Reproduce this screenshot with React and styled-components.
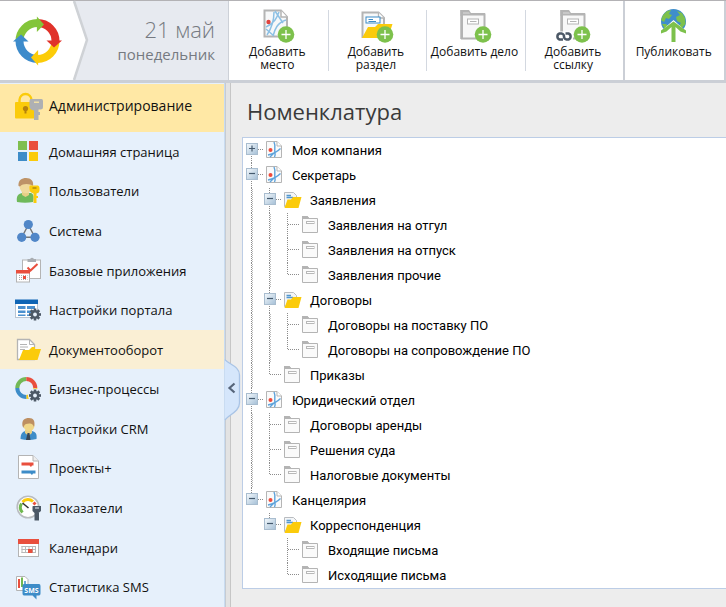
import React, { useState } from "react";
import styled, { createGlobalStyle, css } from "styled-components";

const GlobalStyle = createGlobalStyle`
  *, *::before, *::after { box-sizing: border-box; }
  body { margin: 0; background: #ededed; font-family: "Open Sans", sans-serif; color: #111; }
  ul { list-style: none; margin: 0; padding: 0; }
  button { font: inherit; color: inherit; background: none; border: 0; padding: 0; cursor: pointer; }
  a { color: inherit; text-decoration: none; }
  svg { display: block; overflow: visible; }
`;

/* ---------- layout parts ---------- */

const Page = styled.div`
  display: flex;
  flex-direction: column;
  min-height: 100vh;
`;

const Header = styled.header`
  display: flex;
  height: 83px;
  background: #fff;
  border-top: 1px solid #b3b2b5;
  border-bottom: 3px solid #cbcfd6;
`;

const Brand = styled.div`
  display: flex;
  flex: none;
  width: 229px;
  background: #e7eaf0;
  border-right: 1px solid #cdd1d8;
`;

const LogoLink = styled.a`
  display: block;
  flex: none;
  height: 79px;
`;

const Today = styled.div`
  flex: 1;
  padding: 15px 13px 0 0;
  text-align: right;
  white-space: nowrap;
  color: #767a81;
`;

const Day = styled.div`
  font-size: 22px;
  font-weight: 300;
  line-height: 26px;
`;

const Weekday = styled.div`
  font-size: 15px;
  line-height: 24px;
`;

const Toolbar = styled.div`
  display: flex;
  flex: 1;
  border-right: 2px solid #cbcfd6;
`;

const Tool = styled.button`
  display: flex;
  flex: 1 1 0;
  flex-direction: column;
  align-items: center;
  padding: 8px 2px 0 0;
  position: relative;
  font-size: 12px;
  line-height: 13px;
  ${(p) =>
    p.$edge
      ? css`
          border-left: 2px solid #cbcfd6;
        `
      : css`
          & + &::before {
            content: "";
            position: absolute;
            left: 0;
            top: 9px;
            bottom: 9px;
            width: 1px;
            background: #d3d8e0;
          }
        `}
`;

const ToolLabel = styled.span`
  margin-top: 2px;
  white-space: pre-line;
`;

const Body = styled.div`
  display: flex;
  flex: 1;
`;

const Sidebar = styled.nav`
  display: flex;
  flex-direction: column;
  flex: none;
  width: 225px;
  padding-top: 1px;
  background: #e6f0fb;
  border-right: 1px solid #c9dcf1;
`;

const SectionLink = styled.a`
  display: flex;
  align-items: center;
  gap: 7px;
  height: 48px;
  padding: 0 0 5px 14px;
  background: #ffe8a5;
  font-size: 14px;
`;

const Menu = styled.ul`
  display: grid;
  flex: 1;
  grid-auto-rows: 1fr;
`;

const MenuLink = styled.a`
  display: flex;
  align-items: center;
  gap: 7px;
  height: 100%;
  min-height: 39px;
  padding-left: 14px;
  font-size: 13px;
  background: ${(p) => (p.$active ? "#faefd4" : "transparent")};
`;

const Splitter = styled.div`
  position: relative;
  flex: none;
  width: 6px;
  background: #e3e3e3;
  border-left: 1px solid #c6cbd2;
  border-right: 1px solid #c6c6c6;
`;

const CollapseButton = styled.button`
  position: absolute;
  left: -1px;
  top: 276px;
`;

const Content = styled.main`
  flex: 1;
  min-width: 0;
  padding: 12px 0 18px 11px;
`;

const Title = styled.h1`
  margin: 0 0 10px 5px;
  font-size: 22px;
  line-height: 32px;
  font-weight: 400;
  color: #3a3a3a;
`;

const TreePanel = styled.section`
  background: #fff;
  border: 1px solid #bccde6;
  border-right: 0;
`;

const Row = styled.div`
  display: flex;
  height: 25px;
  font: 13px/25px Roboto, sans-serif;
  color: #000;
`;

const vLine = `repeating-linear-gradient(to bottom, #8c8c8c 0 1px, transparent 1px 2px)`;
const vLineSoft = `repeating-linear-gradient(to bottom, transparent 0 1px, #b8b8b8 1px 2px)`;
const hLine = `repeating-linear-gradient(to right, #8c8c8c 0 1px, transparent 1px 2px)`;

const Guide = styled.span`
  flex: none;
  width: 18px;
  background-repeat: no-repeat;
  ${(p) =>
    p.$line &&
    css`
      background-image: ${vLine}, ${vLineSoft};
      background-size: 1px 100%, 1px 100%;
      background-position: 8px 0, 9px 0;
    `}
`;

const Joint = styled.span`
  display: flex;
  flex: none;
  width: 22px;
  padding: 5px 0 0 3px;
  background-repeat: no-repeat;
  background-image: ${hLine}, ${vLine}, ${vLine};
  background-size: 12px 1px, 1px ${(p) => (p.$above ? "12px" : "0")}, 1px ${(p) => (p.$below ? "13px" : "0")};
  background-position: 9px 11px, 8px 0, 8px 12px;
`;

const Toggle = styled.button`
  width: 12px;
  height: 12px;
`;

const NodeIcon = styled.span`
  flex: none;
  width: 27px;
  padding: 3px 0 0 1px;
`;

/* ---------- icons ---------- */

const GRAY = "#b4b4b4";
const GREEN = "#7dc14c";
const RED = "#e94f3d";
const BLUE = "#3d8cc8";
const YELLOW = "#fbcb0b";
const SLATE = "#4c5866";

function Logo() {
  const parts = [
    ["#83c53a", 0],
    ["#e0322a", 90],
    ["#fccc08", 180],
    ["#3d8bcb", 270],
  ];
  return (
    <svg width="90" height="79" viewBox="0 1 90 79" aria-hidden="true">
      <path d="M0 1H74L87 40L74 80H0Z" fill="#fff" />
      <path d="M74 1L87 40L74 80" fill="none" stroke="#cfd2d6" strokeWidth="2.5" />
      <g transform="translate(37.5 41)">
        {parts.map(([c, a]) => (
          <path key={a} d="M-18 0A18 18 0 0 1 0 -18" transform={`rotate(${a})`} fill="none" stroke={c} strokeWidth="8" />
        ))}
        {parts.map(([c, a]) => (
          <path key={a} d="M-.6 -24.5L6.500 -16.5L-.6 -9Z" transform={`rotate(${a})`} fill={c} />
        ))}
      </g>
    </svg>
  );
}

function Plus() {
  return (
    <g>
      <circle cx="23" cy="25.5" r="8.3" fill={GREEN} />
      <path d="M23 21V30M18.500 25.5H27.500" stroke="#fff" strokeWidth="1.3" />
    </g>
  );
}

function ToolIcon({ kind }) {
  return (
    <svg width="32" height="34" viewBox="-2 0 32 34" aria-hidden="true">
      {kind === "place" && (
        <g fill="none">
          <path d="M1.500 1.500H18L24 8V27.500H1.500Z" fill="#f7f8f9" stroke={GRAY} strokeWidth="2" />
          <path d="M11 3C11 12 8 20 4 26M12 2L20 14M3 18C12 14 14 8 16 3M23 11C14 14 12 20 10 27M3 20L11 27" stroke="#8cc0e4" strokeWidth="1.5" />
          <path d="M18 1.500V8H24" fill="#fff" stroke={GRAY} strokeWidth="1.5" />
          <circle cx="5.5" cy="13" r="2.2" fill="#e0433e" />
        </g>
      )}
      {kind === "section" && (
        <g transform="translate(-1 0)">
          <path d="M1.500 28V3.500H17.500L23 9V28Z" fill="#f7f8f9" stroke={GRAY} strokeWidth="2" />
          <path d="M17.500 3.500V9H23" fill="#fff" stroke={GRAY} strokeWidth="1.3" />
          <rect x="5" y="8" width="14" height="6" fill="#fff" stroke={BLUE} />
          <path d="M7.500 10.500H12M7.500 12.500H15" stroke={BLUE} />
          <path d="M1 29L7 18H14L17 15H31.500L27 29Z" fill={YELLOW} />
        </g>
      )}
      {(kind === "case" || kind === "link") && (
        <g transform={kind === "link" ? "translate(1 0)" : undefined}>
          <path d="M.5 1H9L11 4H25V7H.5Z" fill={GRAY} />
          <path d="M2 3V29.500H24.500V5.500H3" fill="#f8f8f8" stroke={GRAY} strokeWidth="2" />
          <path d="M3 3H9L10 5H3Z" fill="#c8c8c8" />
          <rect x="7.5" y="10" width="11" height="5" fill="#fff" stroke={GRAY} />
          <path d="M10 12.500H16.500" stroke={GRAY} />
          <path d="M1 1V30" stroke={GRAY} strokeWidth="1.5" />
        </g>
      )}
      {kind === "link" && (
        <g fill="none" transform="translate(-3 0)">
          <rect x="-1" y="22.5" width="18" height="10" fill="#fff" />
          <path d="M7 30.5H3.500A3.200 3.200 0 0 1 3.500 24.5H5.500A3.200 3.200 0 0 1 8 28.500M9.500 24.5H12.500A3.200 3.200 0 0 1 12.500 30.5H10.500A3.200 3.200 0 0 1 8 26.500" stroke={SLATE} strokeWidth="2.5" />
        </g>
      )}
      {kind === "publish" ? (
        <g transform="translate(-2 0)">
          <circle cx="15.5" cy="12.5" r="12.5" fill="#3f8ecb" />
          <path d="M5 6L9 2L13 1L11 5L14 6L11 10L8 9L6 13L3 11ZM19 2L24 4L27 9L27.500 15L24 19L21 17L23 14L19 12L18 8L22 6ZM4 15L8 15L10 17L7 20Z" fill={GREEN} />
          <path d="M1 24L15.500 11L30 24V27H1Z" fill="#fff" />
          <path d="M3 24.500V21.500L15.500 12.500L28 21.500V24.500L22.500 22.500L17.500 18V33H13.500V18L8.500 22.500Z" fill={GREEN} />
        </g>
      ) : (
        <Plus />
      )}
    </svg>
  );
}

function Gear({ x, y }) {
  return (
    <g transform={`translate(${x} ${y})`}>
      {[0, 45, 90, 135].map((a) => (
        <rect key={a} x="-1.3" y="-6" width="2.6" height="12" fill={SLATE} transform={`rotate(${a})`} />
      ))}
      <circle r="4.4" fill={SLATE} />
      <circle r="1.9" fill="#e6f0fb" />
    </g>
  );
}

const menuDrawings = {
  lock: (
    <g transform="translate(0 1)">
      <path d="M5.500 10V7A6 6 0 0 1 17.500 7V10" fill="none" stroke={YELLOW} strokeWidth="2.4" />
      <rect x="1" y="9" width="21" height="16.5" rx="1" fill={YELLOW} />
      <circle cx="11.5" cy="15.5" r="2.6" fill="#b5820e" />
      <path d="M10.500 16H12.500V20.500H10.500Z" fill="#b5820e" />
      <path d="M17 6H27.500Q29 6 29 8V14Q29 16.500 26.500 16.500H24.500V19H26V22H24.500V27H20V17.500Q15.500 17 15.500 13V8Q15.500 6 17 6Z" fill="#aeb0b3" />
      <rect x="20" y="8.5" width="5" height="1.5" fill="#f0dfa5" />
    </g>
  ),
  home: (
    <g>
      <rect x="4" y="3" width="9" height="9" fill="#7fbf4f" />
      <rect x="15" y="3" width="9" height="9" fill={RED} />
      <rect x="4" y="14" width="9" height="9" fill={BLUE} />
      <rect x="15" y="14" width="9" height="9" fill={YELLOW} />
    </g>
  ),
  users: (
    <g>
      <path d="M3 25C2 19 4 16.500 9 16L17 16C20 17 20 21 19 25Q11 26.500 3 25Z" fill="#6fb95a" />
      <path d="M8 15H15V18L11.500 20L8 18Z" fill="#e6cf86" />
      <circle cx="12" cy="10" r="6.3" fill="#f0da9c" />
      <path d="M4.500 9C4 3 8 1 12 1C17 1 20 4 19 9C16 6.500 9 6 6 9.500Z" fill="#be9367" />
      <path d="M16 8.500H24Q25.500 9 25.500 11V13Q25.500 16 22.500 16.500V19H24V21H22.500V26H19.500V16.500Q15.500 15.500 15.500 12Q15 9 16 8.500Z" fill={YELLOW} />
      <path d="M18.500 11H22.500" stroke="#9c7b12" strokeWidth="1.2" />
    </g>
  ),
  system: (
    <g>
      <path d="M14.300 8L7.700 20.300H21Z" fill="none" stroke="#777" strokeWidth="1.4" />
      <circle cx="14.3" cy="7.5" r="4.6" fill="#5187c8" />
      <circle cx="7.7" cy="20.3" r="4.6" fill="#5187c8" />
      <circle cx="21" cy="20.3" r="4.6" fill="#5187c8" />
    </g>
  ),
  apps: (
    <g>
      <rect x="8.5" y="3" width="18" height="18.5" fill="#fff" stroke={GRAY} />
      <path d="M13.500 5V2H16Q18 -.5 20 2H22V5Z" fill="#a9adb2" />
      <path d="M13.500 10.500L16.500 13.500L23.500 7" fill="none" stroke={RED} strokeWidth="2" />
      <rect x="2.5" y="13.5" width="13" height="11.5" fill="#fff" stroke={GRAY} />
      <rect x="2" y="13" width="14" height="3.5" fill={RED} />
      <path d="M5 18.500H13.500M5 20.500H13.500M5 22.500H13.500" stroke="#aaa" strokeDasharray="1 1" />
      <rect x="9" y="19" width="3" height="3" fill={RED} />
    </g>
  ),
  portal: (
    <g>
      <rect x="1.5" y="5" width="22" height="16.5" fill="#fff" stroke="#b9c4d0" />
      <rect x="1" y="3.5" width="23" height="4.5" fill="#0f65b5" />
      <path d="M4 10H11.500V13H4ZM13 10H21V13H13ZM4 14.500H11.500V17H4ZM13 14.500H21V17H13ZM4 18.500H11.500V20H4ZM13 18.500H21V20H13Z" fill="#4a90cf" />
      <Gear x="21" y="18.5" />
    </g>
  ),
  documents: (
    <g>
      <path d="M3.500 23.500V3.500H15.500L20.500 8.500V23.500Z" fill="#fff" stroke={GRAY} strokeWidth="1.3" />
      <path d="M15.500 3.500V8.500H20.500" fill="none" stroke={GRAY} />
      <path d="M6 8.500H13M6 11H14M6 13.500H11" stroke={GRAY} />
      <path d="M5 24L9 14H15L18 11H21V13H27L23.500 24Z" fill={YELLOW} />
    </g>
  ),
  process: (
    <g fill="none" strokeWidth="4">
      <path d="M3.300 13A9 9 0 0 1 12.300 4" stroke="#73b956" />
      <path d="M12.300 4A9 9 0 0 1 21.300 13" stroke={RED} />
      <path d="M12.300 22A9 9 0 0 0 21.300 13" stroke={YELLOW} />
      <path d="M3.300 13A9 9 0 0 0 12.300 22" stroke={BLUE} />
      <circle cx="21" cy="20.5" r="7" fill="#e6f0fb" stroke="none" />
      <Gear x="21" y="20.5" />
    </g>
  ),
  crm: (
    <g>
      <path d="M6.500 24C6.500 18 9 16.500 12 16H18C22 17 23 19 22.500 24Q14 26 6.500 24Z" fill={BLUE} />
      <path d="M11 15H18V18L14.500 21L11 18Z" fill="#e9cf84" />
      <circle cx="15" cy="10.5" r="5.5" fill="#f0d789" />
      <path d="M8.500 11C7.500 5 10.500 3 15 3C19.500 3 21.500 6 20 12C19 9 17 8 15 8.500C12 9 10.500 8.500 9.500 13Z" fill="#bd8f62" />
      <path d="M13.500 18H15.500L16.500 25H12Z" fill="#3a4857" />
    </g>
  ),
  projects: (
    <g>
      <path d="M4.500 1.500H19L24.500 7V24.500H4.500Z" fill="#fff" stroke={GRAY} />
      <path d="M19 1.500V7H24.500" fill="#eee" stroke={GRAY} />
      <path d="M7.500 8.500H19.500V11.500H18L17 13L15.500 11.500H7.500Z" fill={RED} />
      <path d="M7.500 16.500H21.500V19.500H19L18 21L16.500 19.500H7.500Z" fill={BLUE} />
    </g>
  ),
  metrics: (
    <g fill="none">
      <circle cx="14" cy="13" r="10.8" fill="#fff" stroke="#b9bcc0" strokeWidth="1.6" />
      <path d="M8.500 18.500A7.500 7.500 0 0 1 7.500 9.500" stroke="#6fb84f" strokeWidth="3" />
      <path d="M8.500 8A7.500 7.500 0 0 1 19 7.500" stroke={YELLOW} strokeWidth="3" />
      <path d="M19.500 8.500L21.500 10.500" stroke={RED} strokeWidth="3" />
      <path d="M8.500 9L14.500 14" stroke="#333" strokeWidth="1.6" />
      <path d="M19 12H27V17L24.500 19H25V26.500H20.500V19L18.500 17V12.500Z" fill={SLATE} />
      <path d="M21 14H25" stroke="#e6f0fb" />
    </g>
  ),
  calendar: (
    <g>
      <rect x="4.5" y="5.5" width="20" height="17" fill="#fff" stroke={GRAY} />
      <rect x="4" y="5" width="21" height="5" fill={RED} />
      <path d="M7.500 12.500H21.500M7.500 15.500H21.500M7.500 18.500H21.500M8 12V19M11.500 12V19M15 12V19M18.500 12V19M21.500 12V19" stroke="#b9b9b9" fill="none" />
      <rect x="14" y="15" width="4.5" height="4" fill={RED} />
    </g>
  ),
  sms: (
    <g>
      <path d="M2.500 3.500H11L14 6.500V17.500H2.500Z" fill="#fff" stroke={GRAY} />
      <path d="M5 6V15" stroke={RED} strokeWidth="2" />
      <path d="M8 4.500V14" stroke="#6fb84f" strokeWidth="2" />
      <path d="M11 8V14" stroke={BLUE} strokeWidth="1.5" />
      <path d="M10 11H25Q26.500 11 26.500 13V20.500Q26.500 22.500 25 22.500H22.500V26.500L18.500 22.500H10Q8.500 22.500 8.500 20.500V13Q8.500 11 10 11Z" fill={BLUE} />
      <text x="17.5" y="19.5" fill="#fff" fontSize="7" fontWeight="700" textAnchor="middle">SMS</text>
    </g>
  ),
};

function MenuIcon({ name }) {
  return (
    <svg width="28" height="28" viewBox="0 0 28 28" aria-hidden="true">
      {menuDrawings[name]}
    </svg>
  );
}

function TreeIcon({ kind }) {
  return (
    <svg width="17" height="18" viewBox="0 0 17 18" aria-hidden="true">
      {kind === "place" && (
        <g fill="none">
          <path d="M.5 .5H11L15.500 5V16.500H.5Z" fill="#fafafa" stroke="#b5b5b5" />
          <path d="M8 1C10 5 8 9 9 12C9.500 14 9 15 8.500 16M2 14C7 13 11 11 14.500 7.500M9 11L4 16" stroke="#5ea3db" strokeWidth="1.4" />
          <path d="M11 .5V5H15.500" fill="#fff" stroke="#b5b5b5" />
          <circle cx="4.5" cy="9" r="2" fill="#ef4a3b" />
        </g>
      )}
      {kind === "section" && (
        <g>
          <path d="M.5 15.500V1.500H9.500L12.500 4.500V15H.5Z" fill="#f4f6f8" stroke="#b9bcc0" />
          <path d="M2.500 4.500H7M2.500 6.500H9" stroke="#5297cf" strokeWidth="1.4" />
          <path d="M.5 17L3.500 8.500H7L9 6H17.500L14.500 17Z" fill={YELLOW} />
        </g>
      )}
      {kind === "case" && (
        <g>
          <path d="M.5 .5H5.500L7 2.500H15.500V16.500H.5Z" fill="#fafafa" stroke="#b4b4b4" />
          <path d="M0 0H5.500L7.500 3H0Z" fill="#b4b4b4" />
          <rect x="4.5" y="5.5" width="7.5" height="2" fill="#fff" stroke="#b8b8b8" />
        </g>
      )}
    </svg>
  );
}

function ToggleIcon({ open }) {
  return (
    <svg width="12" height="12" viewBox="0 0 12 12" aria-hidden="true">
      <defs>
        <linearGradient id="toggleFill" x1="0" y1="0" x2="1" y2="1">
          <stop offset="0" stopColor="#f6fafd" />
          <stop offset="1" stopColor="#a4bfd6" />
        </linearGradient>
      </defs>
      <rect x=".5" y=".5" width="11" height="11" fill="url(#toggleFill)" stroke="#a9bdcf" />
      <path d={open ? "M3 5.500H9" : "M3 5.500H9M6 2.500V8.500"} stroke="#44596d" strokeWidth="1.2" />
    </svg>
  );
}

/* ---------- data ---------- */

const tools = [
  { kind: "place", label: "Добавить\nместо" },
  { kind: "section", label: "Добавить\nраздел" },
  { kind: "case", label: "Добавить дело" },
  { kind: "link", label: "Добавить\nссылку" },
  { kind: "publish", label: "Публиковать", edge: true },
];

const menu = [
  ["home", "Домашняя страница"],
  ["users", "Пользователи"],
  ["system", "Система"],
  ["apps", "Базовые приложения"],
  ["portal", "Настройки портала"],
  ["documents", "Документооборот"],
  ["process", "Бизнес-процессы"],
  ["crm", "Настройки CRM"],
  ["projects", "Проекты+"],
  ["metrics", "Показатели"],
  ["calendar", "Календари"],
  ["sms", "Статистика SMS"],
];

const leaf = (label) => ({ kind: "case", label });
const section = (label, children) => ({ kind: "section", label, children });
const place = (label, children) => ({ kind: "place", label, children });

const tree = [
  place("Моя компания", []),
  place("Секретарь", [
    section("Заявления", [leaf("Заявления на отгул"), leaf("Заявления на отпуск"), leaf("Заявления прочие")]),
    section("Договоры", [leaf("Договоры на поставку ПО"), leaf("Договоры на сопровождение ПО")]),
    leaf("Приказы"),
  ]),
  place("Юридический отдел", [leaf("Договоры аренды"), leaf("Решения суда"), leaf("Налоговые документы")]),
  place("Канцелярия", [section("Корреспонденция", [leaf("Входящие письма"), leaf("Исходящие письма")])]),
];

/* ---------- components ---------- */

function TreeNode({ node, guides, first, last }) {
  const { children } = node;
  const [open, setOpen] = useState(Boolean(children && children.length));
  return (
    <li role="treeitem" aria-expanded={children ? open : undefined}>
      <Row>
        {guides.map((line, i) => (
          <Guide key={i} $line={line} />
        ))}
        <Joint $above={!first || guides.length > 0} $below={!last}>
          {children && (
            <Toggle type="button" aria-label={node.label} onClick={() => setOpen(!open)}>
              <ToggleIcon open={open} />
            </Toggle>
          )}
        </Joint>
        <NodeIcon>
          <TreeIcon kind={node.kind} />
        </NodeIcon>
        <span>{node.label}</span>
      </Row>
      {open && children && <TreeList nodes={children} guides={[...guides, !last]} role="group" />}
    </li>
  );
}

function TreeList({ nodes, guides, role }) {
  return (
    <ul role={role}>
      {nodes.map((n, i) => (
        <TreeNode key={n.label} node={n} guides={guides} first={i === 0} last={i === nodes.length - 1} />
      ))}
    </ul>
  );
}

export default function App() {
  return (
    <Page>
      <GlobalStyle />
      <Header>
        <Brand>
          <LogoLink href="#" aria-label="На главную">
            <Logo />
          </LogoLink>
          <Today>
            <Day>21 май</Day>
            <Weekday>понедельник</Weekday>
          </Today>
        </Brand>
        <Toolbar>
          {tools.map((t) => (
            <Tool key={t.kind} type="button" $edge={t.edge}>
              <ToolIcon kind={t.kind} />
              <ToolLabel>{t.label}</ToolLabel>
            </Tool>
          ))}
        </Toolbar>
      </Header>
      <Body>
        <Sidebar>
          <SectionLink href="#admin">
            <MenuIcon name="lock" />
            Администрирование
          </SectionLink>
          <Menu>
            {menu.map(([name, label]) => (
              <li key={name}>
                <MenuLink href={`#${name}`} $active={name === "documents"}>
                  <MenuIcon name={name} />
                  {label}
                </MenuLink>
              </li>
            ))}
          </Menu>
        </Sidebar>
        <Splitter>
          <CollapseButton type="button" aria-label="Свернуть меню">
            <svg width="16" height="62" viewBox="0 0 16 62" aria-hidden="true">
              <path d="M0 .5C3 5 14.500 7 14.500 16V44C14.500 53 3 56 0 61Z" fill="#d5e6fb" />
              <path d="M0 .5C3 5 14.500 7 14.500 16V44C14.500 53 3 56 0 61" fill="none" stroke="#a9c4e6" strokeWidth="1.3" />
              <path d="M9.500 24.500L4.500 29L9.500 33.500" fill="none" stroke="#56657a" strokeWidth="2.2" />
            </svg>
          </CollapseButton>
        </Splitter>
        <Content>
          <Title>Номенклатура</Title>
          <TreePanel>
            <TreeList nodes={tree} guides={[]} role="tree" />
          </TreePanel>
        </Content>
      </Body>
    </Page>
  );
}
